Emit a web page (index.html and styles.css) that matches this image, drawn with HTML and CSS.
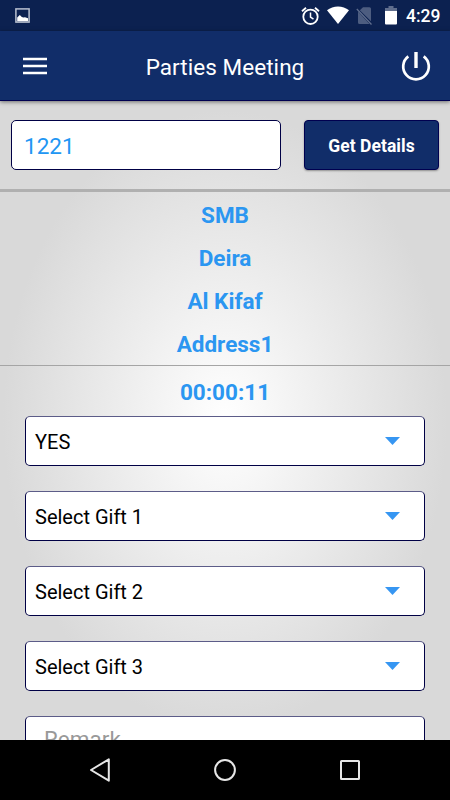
FILE: index.html
```html
<!DOCTYPE html>
<html lang="en">
<head>
<meta charset="utf-8">
<title>Parties Meeting</title>
<link rel="stylesheet" href="styles.css">
</head>
<body>
<div class="status">
  <svg class="status-picture" width="16" height="16" viewBox="0 0 16 16"><rect x=".9" y=".9" width="13.200" height="13.200" fill="none" stroke="#b9c0cf" stroke-width="1.500"/><path d="M2.200 9.500 4.800 7l2 2 1.600.6L10 9.200l3 1v3H2.200z" fill="#fff"/></svg>
  <div class="status-right">
    <svg width="19" height="19" viewBox="0 0 19 19" fill="none" stroke="#fff"><circle cx="9.500" cy="10.800" r="7.200" stroke-width="1.800"/><path d="M9.500 6.500v4.700l3 2" stroke-width="1.500"/><path d="M1 5.200 5 1.700M18 5.200 14 1.700" stroke-width="1.800"/></svg>
    <svg class="wifi" width="22" height="18" viewBox="0 0 22 18"><path d="M0 4.300C6-.8 16-.8 22 4.300L11 18z" fill="#fff"/></svg>
    <svg class="sim" width="17" height="19" viewBox="0 0 17 19"><path d="M3.800 4.200 7 1.200h6.500q1.500 0 1.500 1.500v12.500zM2 5.500l11.500 12.500H3.500Q2 18 2 16.500z" fill="#4d5d80"/><path d="m.8 3 14.700 15.500" stroke="#606e8d" stroke-width="1.300"/></svg>
    <svg class="battery" width="12" height="19" viewBox="0 0 12 19"><path d="M3.500 0h5v2H12v3H0V2h3.500z" fill="#606e8d"/><path d="M0 5h12v12.500q0 1-1 1H1q-1 0-1-1z" fill="#fff"/></svg>
    <span class="clock">4:29</span>
  </div>
</div>
<header class="bar">
  <svg class="menu" width="24" height="18" viewBox="0 0 24 18"><path d="M0 2h24M0 9h24M0 16h24" stroke="#fff" stroke-width="2.700"/></svg>
  <h1 class="title">Parties Meeting</h1>
  <svg class="power" width="30" height="30" viewBox="0 0 30 30" fill="none" stroke="#fff" stroke-width="2.700"><path d="M7.300 5.300A12.800 12.800 0 1 0 22.700 5.300"/><path d="M15 1v16" stroke-width="3.400"/></svg>
</header>
<main class="content">
  <section class="search">
    <div class="field code">1221</div>
    <div class="button">Get Details</div>
  </section>
  <section class="info">
    <div>SMB</div>
    <div>Deira</div>
    <div>Al Kifaf</div>
    <div>Address1</div>
  </section>
  <section class="form">
    <div class="timer">00:00:11</div>
    <div class="field select"><span>YES</span><i class="caret"></i></div>
    <div class="field select"><span>Select Gift 1</span><i class="caret"></i></div>
    <div class="field select"><span>Select Gift 2</span><i class="caret"></i></div>
    <div class="field select"><span>Select Gift 3</span><i class="caret"></i></div>
    <div class="field remark">Remark</div>
  </section>
</main>
<nav class="nav">
  <svg width="22" height="26" viewBox="0 0 22 26"><path d="M19.800 2.300v21.400L2 13z"/></svg>
  <svg width="24" height="24" viewBox="0 0 24 24"><circle cx="12" cy="12" r="9.900"/></svg>
  <svg width="22" height="22" viewBox="0 0 22 22"><rect x="2" y="2" width="18" height="18" rx=".5"/></svg>
</nav>
</body>
</html>
```
FILE: styles.css
```css
* { box-sizing: border-box; }
body {
  margin: 0;
  width: 450px;
  height: 800px;
  overflow: hidden;
  display: flex;
  flex-direction: column;
  font-family: Roboto, sans-serif;
}
svg { display: block; flex: none; }
.status {
  flex: none;
  height: 31px;
  background: #0c2150;
  display: flex;
  justify-content: space-between;
  padding: 0 10px 0 15px;
}
.status-picture { margin-top: 8px; }
.status-right { display: flex; padding-top: 6px; }
.wifi { margin-left: 7px; }
.sim { margin-left: 7px; }
.battery { margin-left: 12px; }
.clock {
  width: 34px;
  margin-left: 9px;
  font-size: 17.5px;
  font-weight: 500;
  line-height: 21px;
  color: #fff;
  white-space: nowrap;
}
.bar {
  flex: none;
  height: 70px;
  background: #112d69;
  border-bottom: 1px solid #000050;
  box-shadow: 0 1px 4px rgba(0, 0, 0, .5);
  display: flex;
  align-items: center;
  justify-content: space-between;
  padding: 0 19px 0 23px;
  z-index: 1;
}
.title {
  margin: 3px 0 0 2px;
  font-size: 22.5px;
  font-weight: 400;
  letter-spacing: .05px;
  color: #fff;
}
.content {
  flex: none;
  height: 639px;
  overflow: hidden;
  background: radial-gradient(ellipse 222px 310px at 225px 319px, #fff 0%, #d9d9d9 100%);
}
.search {
  height: 91px;
  border-bottom: 3px solid #b0b0b0;
  display: flex;
  justify-content: space-between;
  padding: 19px 11px 0;
}
.field {
  background: #fff;
  border: 1px solid #000045;
  border-radius: 5px;
  height: 50px;
}
.code {
  width: 270px;
  padding-left: 12px;
  font-size: 22.5px;
  line-height: 50px;
  color: #2196f3;
}
.button {
  width: 135px;
  height: 50px;
  border: 1px solid #000050;
  border-radius: 4px;
  background: #112d69;
  box-shadow: 0 1px 2px rgba(0, 0, 0, .35);
  color: #fff;
  font-size: 17.5px;
  font-weight: 700;
  letter-spacing: .05px;
  line-height: 50px;
  text-align: center;
}
.info {
  height: 174px;
  padding-top: 2px;
  border-bottom: 1px solid #a5a5a5;
}
.info div, .timer {
  height: 43px;
  line-height: 43px;
  text-align: center;
  font-size: 22.5px;
  font-weight: 700;
  color: #2b96f1;
}
.form { padding: 5px 25px 0; }
.timer { height: 45px; }
.select {
  margin-bottom: 25px;
  border-top-color: #5c5c88;
  display: flex;
  align-items: center;
  justify-content: space-between;
  padding: 2px 24px 0 9px;
  font-size: 20px;
  color: #000;
}
.caret {
  width: 15px;
  height: 8px;
  margin-top: -2px;
  background: #3696f2;
  clip-path: polygon(0 0, 100% 0, 50% 100%);
}
.remark {
  border-top-color: #5c5c88;
  padding-left: 18px;
  font-size: 22.5px;
  line-height: 44px;
  color: #999;
}
.nav {
  flex: none;
  height: 60px;
  background: #000;
  display: flex;
  align-items: center;
  justify-content: space-between;
  padding: 0 89px;
}
.nav svg { fill: none; stroke: #e6e6e6; stroke-width: 2; stroke-linejoin: round; }
```
